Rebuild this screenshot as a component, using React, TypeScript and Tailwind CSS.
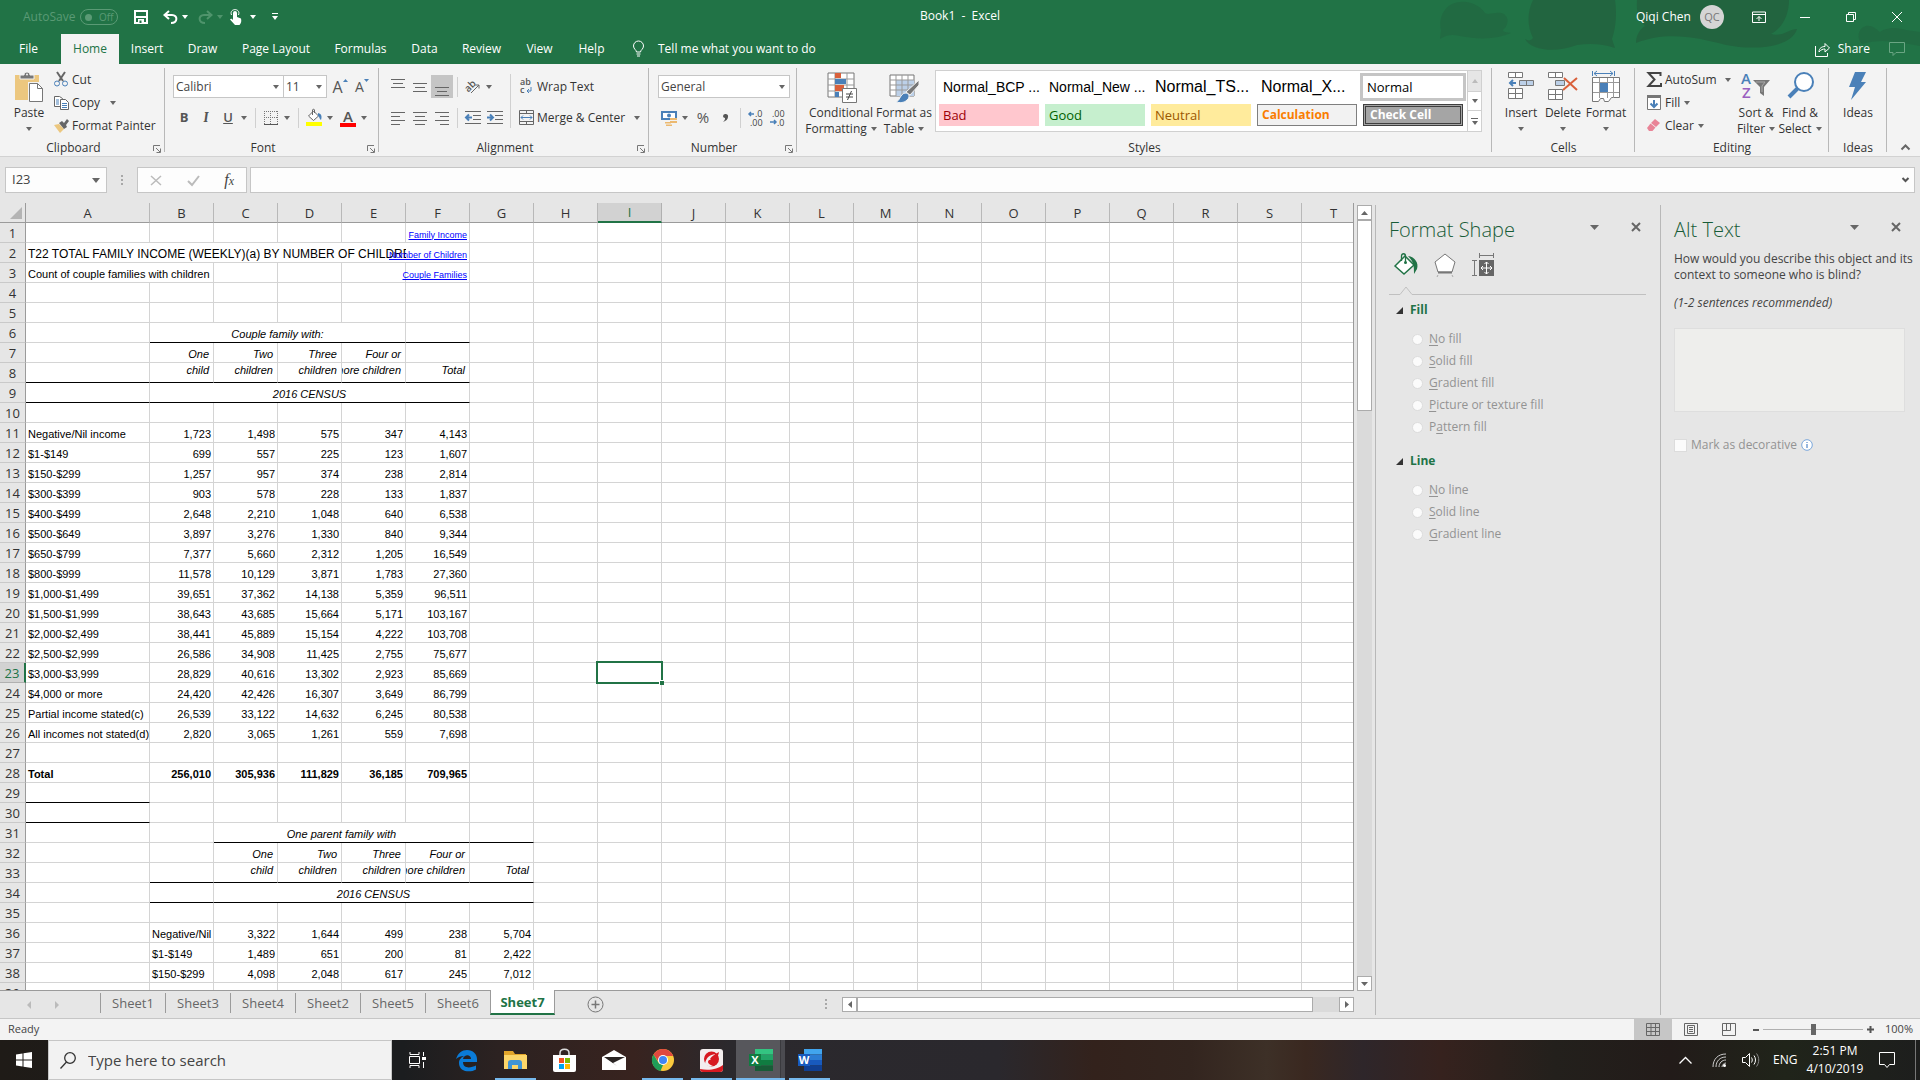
import type { ReactNode } from "react";
import { clsx } from "clsx";

interface IconProps {
  w: number;
  h: number;
  children: ReactNode;
  className?: string;
}

const Icon = ({ w, h, children, className }: IconProps) => (
  <svg
    width={w}
    height={h}
    viewBox={`0 0 ${w} ${h}`}
    fill="none"
    aria-hidden="true"
    className={clsx("shrink-0 overflow-visible", className)}
  >
    {children}
  </svg>
);

const Caret = ({ className }: { className?: string }) => (
  <Icon w={6} h={4} className={className ?? "text-[#666]"}>
    <path d="M0 0h6L3 4z" fill="currentColor" />
  </Icon>
);

const Launcher = () => (
  <Icon w={8} h={8}>
    <path d="M.5 6V.5H7M3 3l4 4M7.5 3.5v4h-4" stroke="#777" />
  </Icon>
);

/* ---------- Title bar ---------- */

const TitleArt = () => (
  <svg
    className="absolute right-0 top-0 h-16 w-[520px]"
    viewBox="0 0 520 64"
    fill="#22643f"
    aria-hidden="true"
  >
    <path d="M60 2C46 3 38 16 41 30l-1 9c6-4 12-5 20-3 20 4 38 3 51-3-8-1-10-2-6-5 6-8 1-17-9-15-5 0-8 2-11 0C79 5 70 1 60 2z" opacity=".6" />
    <path d="M133 0c-6 12-6 26 0 38-2 3-5 3-8 1 6 12 32 14 52 6 14-2 26-1 38 3l-3-9c4-12 5-26 3-39z" opacity=".9" />
    <path d="M237 0c-1 12 2 20 8 26-6 4-9 10-9 17 30-12 60-6 90 2 30 6 66 2 71-16-8 0-14 8-26 5 12-6 18-20 18-34z" />
    <path d="M462 44c-6-6-4-16 4-18 6-1 10 3 14 6 8-6 20-4 26-2l14 2v14c-20-4-40-8-58-2z" opacity=".6" />
  </svg>
);

const TitleBar = () => (
  <div className="relative flex h-[34px] items-center text-xs text-white">
    <span className="ml-[23px] w-[57px] text-[#5a9a75]">AutoSave</span>
    <button
      aria-label="AutoSave off"
      className="flex h-4 w-[38px] items-center gap-[7px] rounded-full border border-[#5a9a75] pl-1 text-[10px] leading-3 text-[#5a9a75]"
    >
      <span className="size-[7px] rounded-full bg-[#5a9a75]" />
      Off
    </button>
    <button aria-label="Save" className="ml-4 w-[29px]">
      <Icon w={14} h={14}>
        <path d="M1 1h12v12H1z" stroke="#fff" strokeWidth="2" />
        <path d="M1 6h12v2H1zM4 9h6v5H4z" fill="#fff" />
        <path d="M5.5 10.5h2V13h-2z" fill="#217346" />
      </Icon>
    </button>
    <button aria-label="Undo" className="flex w-[35px] items-center gap-1">
      <Icon w={15} h={14}>
        <path d="M6 1L1.5 5 6 9M2 5h7c6 0 6 8-1 8" stroke="#fff" strokeWidth="2" />
      </Icon>
      <Caret className="text-white" />
    </button>
    <button aria-label="Redo" className="flex w-8 items-center gap-1">
      <Icon w={15} h={14}>
        <path d="M9 1l4.5 4L9 9M13 5H6C0 5 0 13 7 13" stroke="#4f946c" strokeWidth="2" />
      </Icon>
      <Caret className="text-[#4f946c]" />
    </button>
    <button aria-label="Touch mode" className="flex w-[42px] items-center gap-2">
      <Icon w={12} h={16}>
        <path d="M3 7V4a2 2 0 0 1 4 0v4l4 1.5c1 4-1 6-1.500 6.500H5L0 10.500C1 9 2 10 3 11z" fill="#fff" />
        <path d="M1.5 6C0 2 3 .6 5 .6S10 2 8.500 6" stroke="#fff" />
      </Icon>
      <Caret className="text-white" />
    </button>
    <button aria-label="Customize Quick Access Toolbar">
      <Icon w={6} h={8}>
        <path d="M0 .5h6" stroke="#fff" />
        <path d="M0 3h6L3 7z" fill="#fff" />
      </Icon>
    </button>
    <h1 className="absolute inset-x-0 top-2 text-center leading-4 whitespace-pre">Book1  -  Excel</h1>
    <div className="relative ml-auto flex items-center pr-[18px]">
      <span className="w-16">Qiqi Chen</span>
      <span className="mr-7 flex size-6 items-center justify-center rounded-full bg-[#d5d5d5] text-[11px] text-[#777]">
        QC
      </span>
      <button aria-label="Ribbon display options" className="mr-[34px]">
        <Icon w={14} h={12}>
          <path d="M.5 1h13v10.500H.5zM.5 3.500h13M7 10V5.500M4.500 8L7 5.500 9.500 8" stroke="#fff" />
        </Icon>
      </button>
      <button aria-label="Minimize" className="mr-9">
        <Icon w={10} h={10}>
          <path d="M0 5.500h10" stroke="#fff" />
        </Icon>
      </button>
      <button aria-label="Restore" className="mr-9">
        <Icon w={10} h={10}>
          <path d="M.5 2.500h7v7h-7zM2.500 2.500v-2h7v7h-2" stroke="#fff" />
        </Icon>
      </button>
      <button aria-label="Close">
        <Icon w={10} h={10}>
          <path d="M0 0l10 10M10 0L0 10" stroke="#fff" />
        </Icon>
      </button>
    </div>
  </div>
);

const tabs = [
  { name: "File", width: "w-[61px] pr-1" },
  { name: "Home", width: "w-[58px]" },
  { name: "Insert", width: "w-[56px]" },
  { name: "Draw", width: "w-[55px]" },
  { name: "Page Layout", width: "w-[92px]" },
  { name: "Formulas", width: "w-[77px]" },
  { name: "Data", width: "w-[51px]" },
  { name: "Review", width: "w-[63px]" },
  { name: "View", width: "w-[53px]" },
  { name: "Help", width: "w-[51px]" },
];

const RibbonTabs = () => (
  <nav className="relative flex h-[30px] items-center text-xs text-white">
    {tabs.map((tab) => (
      <button
        key={tab.name}
        className={clsx(
          "h-full text-center whitespace-nowrap",
          tab.width,
          tab.name === "Home" && "bg-[#f3f3f3] text-[#217346]"
        )}
      >
        {tab.name}
      </button>
    ))}
    <button className="ml-4 flex items-center gap-[14px]">
      <Icon w={11} h={16}>
        <path d="M3.500 11C3.500 9 .5 8 .5 5a5 5 0 0 1 10 0c0 3-3 4-3 6zM3.500 13h4M4 15h3" stroke="#fff" />
      </Icon>
      Tell me what you want to do
    </button>
    <button className="ml-auto flex items-center gap-2">
      <Icon w={15} h={15}>
        <path d="M.5 4v10.500h12V11M4 10c0-4 3-5.500 6-5.500V1.500l4.500 4.500L10 10V7c-2 0-4 .5-6 3z" stroke="#fff" />
      </Icon>
      Share
    </button>
    <button aria-label="Comments" className="mr-[15px] ml-[19px]">
      <Icon w={16} h={14}>
        <path d="M.5.5h15v10H7L4 13.500v-3H.5z" stroke="#6aa583" />
      </Icon>
    </button>
  </nav>
);

/* ---------- Ribbon ---------- */

interface GroupProps {
  label: string;
  className: string;
  launcher?: boolean;
  children: ReactNode;
}

const Group = ({ label, className, launcher, children }: GroupProps) => (
  <section className={clsx("relative flex shrink-0 flex-col after:absolute after:top-1 after:right-0 after:bottom-1 after:w-px after:bg-[#b8b8b8]", className)}>
    <div className="flex h-[76px] w-full">{children}</div>
    <div className={clsx("relative h-4 text-center text-xs leading-4 text-[#333]", launcher && "pr-[18px]")}>
      {label}
      {launcher && (
        <button aria-label={`${label} settings`} className="absolute top-[5px] right-1">
          <Launcher />
        </button>
      )}
    </div>
  </section>
);

interface BigButtonProps {
  icon: ReactNode;
  lines: string[];
  className: string;
}

const BigButton = ({ icon, lines, className }: BigButtonProps) => (
  <button className={clsx("flex flex-col items-center pt-2 text-xs leading-4 whitespace-nowrap text-[#333]", className)}>
    <span className="flex h-[33px] items-start">{icon}</span>
    <span>{lines[0]}</span>
    <span className="flex h-4 items-center gap-1">
      {lines[1]}
      {lines.length > 1 && <Caret />}
    </span>
  </button>
);

interface SmallButtonProps {
  icon: ReactNode;
  label: string;
  caret?: string;
}

const SmallButton = ({ icon, label, caret }: SmallButtonProps) => (
  <button className="flex h-[23px] items-center text-xs whitespace-nowrap text-[#333]">
    <span className="flex w-[18px] shrink-0 items-center">{icon}</span>
    {label}
    {caret && (
      <span className={caret}>
        <Caret />
      </span>
    )}
  </button>
);

const ComboBox = ({ label, value, className }: { label: string; value: string; className: string }) => (
  <label className={clsx("relative flex h-[23px] items-center border border-[#c6c6c6] bg-white", className)}>
    <select aria-label={label} className="h-full w-full appearance-none pl-[2px] text-xs text-[#444] outline-none">
      <option>{value}</option>
    </select>
    <Caret className="absolute right-1 text-[#666]" />
  </label>
);

const Tool = ({ label, className, children }: { label: string; className?: string; children: ReactNode }) => (
  <button aria-label={label} className={clsx("flex h-[23px] w-[22px] shrink-0 items-center justify-center text-[#555]", className)}>
    {children}
  </button>
);

const Divider = ({ className }: { className?: string }) => (
  <span className={clsx("w-px shrink-0 bg-[#d0d0d0]", className ?? "h-5")} />
);

const Lines = ({ d }: { d: string }) => (
  <Icon w={14} h={14}>
    <path d={d} stroke="#666" />
  </Icon>
);

const ClipboardGroup = () => (
  <Group label="Clipboard" className="w-[165px]" launcher>
    <BigButton
      className="w-[54px] pl-1"
      lines={["Paste", ""]}
      icon={
        <Icon w={28} h={30}>
          <path d="M0 3h24v25H0z" fill="#ecc77f" />
          <path d="M5 7V3h4c0-4 6-4 6 0h4v4z" fill="#777" stroke="#f3f3f3" />
          <circle cx="12" cy="2.500" r="1" fill="#f3f3f3" />
          <path d="M13 10h11l5 5v15H13z" fill="#f3f3f3" />
          <path d="M14.500 11.500h8l5 5v13h-13z" fill="#fff" stroke="#777" />
          <path d="M22.500 11.500v5h5" stroke="#777" />
        </Icon>
      }
    />
    <div className="flex flex-col pt-1">
      <SmallButton
        label="Cut"
        icon={
          <Icon w={14} h={15}>
            <path d="M3 0l6 9M11 0L5 9" stroke="#666" strokeWidth="2" />
            <circle cx="3" cy="11.500" r="2.500" stroke="#4a80b8" />
            <circle cx="11" cy="11.500" r="2.500" stroke="#4a80b8" />
          </Icon>
        }
      />
      <SmallButton
        label="Copy"
        caret="ml-[10px]"
        icon={
          <Icon w={15} h={14}>
            <path d="M.5.5h5l3 2v8h-8z" fill="#fff" stroke="#666" />
            <path d="M2 4h3M2 6h3M2 8h3" stroke="#4a80b8" />
            <path d="M6.500 3.500h5l3 3v7h-8z" fill="#fff" stroke="#666" />
            <path d="M8 7.500h5M8 9.500h5M8 11.500h5" stroke="#4a80b8" />
          </Icon>
        }
      />
      <SmallButton
        label="Format Painter"
        icon={
          <Icon w={15} h={14}>
            <path d="M0 6l5-1 5 5-4 4z" fill="#ecc77f" />
            <path d="M5 4l3-2 2 2 3-4 2 2-3 4 1 2-3 2z" fill="#666" />
          </Icon>
        }
      />
    </div>
  </Group>
);

const FontGroup = () => (
  <Group label="Font" className="w-[214px]" launcher>
    <div className="flex flex-col gap-2 pt-[11px] pl-2">
      <div className="flex items-center">
        <ComboBox label="Font" value="Calibri" className="w-[111px]" />
        <ComboBox label="Font size" value="11" className="w-[43px] border-l-0" />
        <Tool label="Increase font size" className="ml-[2px] text-base">
          A
          <Icon w={5} h={3} className="mb-3">
            <path d="M0 3h5L2.500 0z" fill="#4a80b8" />
          </Icon>
        </Tool>
        <Tool label="Decrease font size" className="text-sm">
          A
          <Icon w={5} h={3} className="mb-3">
            <path d="M0 0h5L2.500 3z" fill="#4a80b8" />
          </Icon>
        </Tool>
      </div>
      <div className="flex items-center">
        <Tool label="Bold" className="text-[13px] font-bold">B</Tool>
        <Tool label="Italic" className="font-serif text-sm font-bold italic">I</Tool>
        <Tool label="Underline" className="text-[13px] font-semibold underline">U</Tool>
        <Caret className="ml-[2px] text-[#666]" />
        <Divider className="ml-2 h-5" />
        <Tool label="Borders" className="ml-1">
          <Icon w={14} h={14}>
            <path d="M0 .5h14M.5 0v14M13.500 0v14M6.500 0v13M0 6.500h13" stroke="#777" strokeDasharray="1 1" />
            <path d="M0 13.500h14" stroke="#555" />
          </Icon>
        </Tool>
        <Caret className="ml-[2px] text-[#666]" />
        <Divider className="ml-2 h-5" />
        <Tool label="Fill color" className="ml-1">
          <Icon w={16} h={17}>
            <path d="M2.500 7l5-5 5 5-5 4.500z" fill="#fff" stroke="#666" />
            <path d="M6.500 6V1c0-1 2-1 2 0v3" stroke="#666" />
            <path d="M12 4c4 1 4 4 3 7-2-1-1-3-3-4z" fill="#4a80b8" />
            <path d="M0 13h16v4H0z" fill="#ff0" />
          </Icon>
        </Tool>
        <Caret className="ml-[2px] text-[#666]" />
        <Tool label="Font color" className="ml-1">
          <span className="border-b-4 border-[#f00] px-[3px] text-[15px] leading-[14px] font-semibold">A</span>
        </Tool>
        <Caret className="ml-[2px] text-[#666]" />
      </div>
    </div>
  </Group>
);

const AlignmentGroup = () => (
  <Group label="Alignment" className="w-[270px]" launcher>
    <div className="flex flex-col gap-2 pt-[11px] pl-2">
      <div className="flex items-center">
        <Tool label="Top align"><Lines d="M0 -.5h14M2 3.500h10M0 7.500h14" /></Tool>
        <Tool label="Middle align"><Lines d="M0 3.500h14M2 7.500h10M0 11.500h14" /></Tool>
        <Tool label="Bottom align" className="bg-[#c5c5c5]"><Lines d="M0 7.500h14M2 11.500h10M0 15.500h14" /></Tool>
        <Divider className="ml-1 h-5" />
        <Tool label="Orientation" className="ml-1">
          <Icon w={16} h={16}>
            <text x="0" y="10" fontSize="10" fontWeight="600" fill="#555" transform="rotate(-45 6 8)">ab</text>
            <path d="M6 14l8-8M10.500 6H14v3.500" stroke="#666" />
          </Icon>
        </Tool>
        <Caret className="ml-[2px] text-[#666]" />
      </div>
      <div className="flex items-center">
        <Tool label="Align left"><Lines d="M0 1.500h14M0 5.500h9M0 9.500h14M0 13.500h9" /></Tool>
        <Tool label="Center"><Lines d="M0 1.500h14M2 5.500h10M0 9.500h14M2 13.500h10" /></Tool>
        <Tool label="Align right"><Lines d="M0 1.500h14M5 5.500h9M0 9.500h14M5 13.500h9" /></Tool>
        <Divider className="ml-1 h-5" />
        <Tool label="Decrease indent" className="ml-1">
          <Icon w={16} h={14}>
            <path d="M0 .5h16M8 4.500h8M8 8.500h8M0 12.500h16" stroke="#666" />
            <path d="M7 6.500H2M4 3.500l-3 3 3 3" stroke="#4a80b8" strokeWidth="2" />
          </Icon>
        </Tool>
        <Tool label="Increase indent">
          <Icon w={16} h={14}>
            <path d="M0 .5h16M8 4.500h8M8 8.500h8M0 12.500h16" stroke="#666" />
            <path d="M0 6.500h5M3 3.500l3 3-3 3" stroke="#4a80b8" strokeWidth="2" />
          </Icon>
        </Tool>
      </div>
    </div>
    <Divider className="mt-[10px] ml-1 h-[54px]" />
    <div className="flex flex-col gap-2 pt-[11px] pl-2">
      <SmallButton
        label="Wrap Text"
        icon={
          <Icon w={15} h={16}>
            <text x="1" y="6" fontSize="9" fontWeight="600" fill="#555">ab</text>
            <text x="1" y="14" fontSize="9" fontWeight="600" fill="#555">c</text>
            <path d="M12 8v4H8M10 10l-2 2 2 2" stroke="#4a80b8" />
          </Icon>
        }
      />
      <SmallButton
        label="Merge & Center"
        caret="ml-[9px]"
        icon={
          <Icon w={15} h={15}>
            <path d="M.5.5h14v14H.5zM.5 3.500h14M.5 11.500h14M7.500 0v3M7.500 12v3" stroke="#666" />
            <path d="M2 7.500h11M4 5.500l-2 2 2 2M11 5.500l2 2-2 2" stroke="#4a80b8" />
          </Icon>
        }
      />
    </div>
  </Group>
);

const NumberGroup = () => (
  <Group label="Number" className="w-[148px]" launcher>
    <div className="flex flex-col gap-2 pt-[11px] pl-[9px]">
      <ComboBox label="Number format" value="General" className="w-[132px]" />
      <div className="flex items-center">
        <Tool label="Accounting format">
          <Icon w={17} h={16}>
            <path d="M0 1h16v9H0z" fill="#4a80b8" />
            <path d="M2 3h12v5H2z" fill="#fff" />
            <circle cx="8" cy="5.500" r="2" fill="#4a80b8" />
            <path d="M9 8h7v2H9zM9 11h7v2H9zM4 12h6v1.500H4zM5 14.500h6V16H5z" fill="#ecb970" />
          </Icon>
        </Tool>
        <Caret className="ml-[2px] text-[#666]" />
        <Tool label="Percent style" className="ml-1 text-[15px]">%</Tool>
        <Tool label="Comma style">
          <Icon w={5} h={8}>
            <path d="M0 2a2 2 0 1 1 5 1C5 5 3 7 0 8c2-2 2-3 2-4C1 4 0 3 0 2z" fill="#555" />
          </Icon>
        </Tool>
        <Divider className="ml-1 h-5" />
        <Tool label="Increase decimal" className="ml-1">
          <Icon w={16} h={16}>
            <path d="M6 4H1M3 2L1 4l2 2" stroke="#4a80b8" strokeWidth="1.500" />
            <text x="7" y="7" fontSize="9" fill="#444">.0</text>
            <text x="2" y="16" fontSize="9" fill="#444">.00</text>
          </Icon>
        </Tool>
        <Tool label="Decrease decimal">
          <Icon w={16} h={16}>
            <text x="2" y="7" fontSize="9" fill="#444">.00</text>
            <path d="M0 12h6M4 10l2 2-2 2" stroke="#4a80b8" strokeWidth="1.500" />
            <text x="7" y="16" fontSize="9" fill="#444">.0</text>
          </Icon>
        </Tool>
      </div>
    </div>
  </Group>
);

const styleCells = [
  { name: "Normal_BCP ...", cls: "font-[Liberation_Sans] text-sm text-black" },
  { name: "Normal_New ...", cls: "font-[Liberation_Sans] text-sm text-black" },
  { name: "Normal_TS...", cls: "font-[Liberation_Sans] text-base text-black" },
  { name: "Normal_X...", cls: "font-[Liberation_Sans] text-base text-black" },
  { name: "Normal", cls: "text-[13px] text-black outline-3 outline-[#c5c5c5]" },
  { name: "Bad", cls: "bg-[#ffc7ce] text-[13px] text-[#9c0006]" },
  { name: "Good", cls: "bg-[#c6efce] text-[13px] text-[#006100]" },
  { name: "Neutral", cls: "bg-[#ffeb9c] text-[13px] text-[#9c5700]" },
  { name: "Calculation", cls: "border border-[#7f7f7f] bg-[#f2f2f2] text-xs font-bold text-[#fa7d00]" },
  { name: "Check Cell", cls: "border-3 border-double border-[#3f3f3f] bg-[#a5a5a5] text-xs font-bold text-white" },
];

const StylesGroup = () => (
  <Group label="Styles" className="min-w-[695px] flex-1">
    <BigButton
      className="ml-3 w-16"
      lines={["Conditional", "Formatting"]}
      icon={
        <Icon w={29} h={31}>
          <path d="M1 1h26v24H1z" fill="#fff" stroke="#777" />
          <path d="M1 7h26M1 13h26M1 19h26M8 1v24M20 1v24" stroke="#999" />
          <path d="M8 1h6v5H8zM8 13h9v6H8z" fill="#d9603b" />
          <path d="M8 7h11v5H8zM8 20h4v5H8z" fill="#4a80b8" />
          <path d="M15.500 16.500h14v14h-14z" fill="#fff" stroke="#777" />
          <path d="M19 22h7M19 25h7M24.500 19l-4 9" stroke="#444" />
        </Icon>
      }
    />
    <BigButton
      className="w-[62px]"
      lines={["Format as", "Table"]}
      icon={
        <Icon w={30} h={31}>
          <path d="M1 3h24v21H1z" fill="#fff" stroke="#777" />
          <path d="M7 8h18v16H7z" fill="#bcd0e8" />
          <path d="M1 8h24M1 13h24M1 18h24M7 3v21M13 3v21M19 3v21" stroke="#999" />
          <path d="M30 8v5l-9 10-4-3z" fill="#777" stroke="#f3f3f3" />
          <path d="M7 30c4-1 4-8 9-9 5 0 5 5 2 7-3 3-7 3-11 2z" fill="#4a80b8" stroke="#f3f3f3" />
        </Icon>
      }
    />
    <div className="mt-[6px] flex h-[62px] border border-[#d0d0d0] bg-white">
      <div className="grid grid-cols-[repeat(5,100px)] grid-rows-[22px_22px] content-start gap-[6px] pt-[5px] pr-1 pl-[3px]">
        {styleCells.map((cell) => (
          <button
            key={cell.name}
            className={clsx("flex items-center pl-1 text-left leading-5 whitespace-nowrap", cell.cls)}
          >
            {cell.name}
          </button>
        ))}
      </div>
      <div className="flex w-[14px] flex-col border-l border-[#d0d0d0]">
        <button aria-label="Scroll styles up" className="flex h-[21px] items-center justify-center border-b border-[#d0d0d0] bg-[#e6e6e6]">
          <Caret className="rotate-180 text-[#bbb]" />
        </button>
        <button aria-label="Scroll styles down" className="flex h-[19px] items-center justify-center border-b border-[#d0d0d0]">
          <Caret />
        </button>
        <button aria-label="More styles" className="flex flex-1 flex-col items-center justify-center gap-[2px]">
          <span className="h-px w-[7px] bg-[#666]" />
          <Caret />
        </button>
      </div>
    </div>
  </Group>
);

const CellsGroup = () => (
  <Group label="Cells" className="w-[143px]">
    <BigButton
      className="ml-2 w-[42px]"
      lines={["Insert", ""]}
      icon={
        <Icon w={27} h={28}>
          <path d="M.5.5h14v5H.5zM7.500.5v5M.5 16.500h14v10H.5zM7.500 17v10M.5 21.500h14" fill="#fff" stroke="#777" />
          <path d="M11.500 8.500h14v5h-14zM18.500 8v5" fill="#bcd0e8" stroke="#777" />
          <path d="M8 11H2M5 8l-3 3 3 3" stroke="#4a80b8" strokeWidth="2" />
        </Icon>
      }
    />
    <BigButton
      className="w-[42px]"
      lines={["Delete", ""]}
      icon={
        <Icon w={30} h={29}>
          <path d="M.5.5h14v5H.5zM7.500.5v5M.5 17.500h14v10H.5zM7.500 17v10M.5 22.500h14" fill="#fff" stroke="#777" />
          <path d="M7.500 8.500h9v5h-9z" fill="#bcd0e8" stroke="#777" />
          <path d="M16 6l13 12M29 6L15 18" stroke="#d9603b" strokeWidth="2" />
        </Icon>
      }
    />
    <BigButton
      className="w-[44px]"
      lines={["Format", ""]}
      icon={
        <Icon w={28} h={31}>
          <path d="M.5-1v5M22.500-1v5M2 1.500h19M5-1L2 1.500 5 4M18-1l3 2.500L18 4" stroke="#4a80b8" />
          <path d="M.5 5.500h27v20h-8l-3 4h-4l-1-3h-3l-2 3h-6z" fill="#fff" stroke="#777" />
          <path d="M1 10.500h26M1 20.500h26M7.500 6v20M15.500 6v20M21.500 6v20" stroke="#999" />
          <path d="M8 11h8v9H8z" fill="#4a80b8" />
        </Icon>
      }
    />
  </Group>
);

const EditingGroup = () => (
  <Group label="Editing" className="w-[194px]">
    <div className="flex w-[103px] flex-col pt-1 pl-3">
      <SmallButton
        label="AutoSum"
        caret="ml-2"
        icon={
          <Icon w={15} h={15}>
            <path d="M13.500 4V1H1.500l6 6.500-6 6.500h12.500v-3" stroke="#444" strokeWidth="2" />
          </Icon>
        }
      />
      <SmallButton
        label="Fill"
        caret="ml-1"
        icon={
          <Icon w={14} h={15}>
            <path d="M.5.5h13v14H.5z" fill="#fff" stroke="#777" />
            <path d="M0 0h14v3H0z" fill="#777" />
            <path d="M7 5v7M3.500 8.500L7 12l3.500-3.500" stroke="#4a80b8" strokeWidth="2" />
          </Icon>
        }
      />
      <SmallButton
        label="Clear"
        caret="ml-1"
        icon={
          <Icon w={13} h={13}>
            <path d="M8 0l5 4-4 4-5-4z" fill="#e98497" />
            <path d="M3.500 4.500l5 4-3 3.500H2L0 9z" fill="#e98497" />
          </Icon>
        }
      />
    </div>
    <BigButton
      className="w-9"
      lines={["Sort &", "Filter"]}
      icon={
        <Icon w={30} h={29}>
          <text x="0" y="12" fontSize="15" fontWeight="600" fill="#4a80b8">A</text>
          <text x="1" y="26" fontSize="15" fontWeight="600" fill="#9a5fc0">Z</text>
          <path d="M12 8h17l-6 7v9l-4-3v-6z" fill="#777" />
          <path d="M15 10h9l-3 4v6" stroke="#aaa" />
        </Icon>
      }
    />
    <BigButton
      className="ml-1 w-11"
      lines={["Find &", "Select"]}
      icon={
        <Icon w={27} h={28}>
          <circle cx="17" cy="10" r="9" fill="#fff" stroke="#4a80b8" strokeWidth="2" />
          <path d="M11 16L2 25" stroke="#4a80b8" strokeWidth="4" />
        </Icon>
      }
    />
  </Group>
);

const Ribbon = () => (
  <div className="flex h-[93px] border-b border-[#d2d2d2] bg-[#f3f3f3]">
    <ClipboardGroup />
    <FontGroup />
    <AlignmentGroup />
    <NumberGroup />
    <StylesGroup />
    <CellsGroup />
    <EditingGroup />
    <Group label="Ideas" className="w-[58px]">
      <BigButton
        className="w-full"
        lines={["Ideas"]}
        icon={
          <Icon w={18} h={28}>
            <path d="M6 0h11l-5 10h5L2 28l4-13H0z" fill="#4a80b8" />
          </Icon>
        }
      />
    </Group>
    <button aria-label="Collapse the ribbon" className="mr-[10px] ml-[14px] self-end pb-[6px]">
      <Icon w={9} h={6}>
        <path d="M.5 5.500l4-4 4 4" stroke="#666" strokeWidth="2" />
      </Icon>
    </button>
  </div>
);

const FormulaBar = () => (
  <div className="flex h-[46px] items-center px-[5px] text-[13px] text-[#444]">
    <div className="relative flex h-[26px] w-[102px] items-center border border-[#c6c6c6] bg-[#fdfdfd]">
      <input aria-label="Name box" defaultValue="I23" className="w-full pl-[6px] outline-none" />
      <Icon w={8} h={5} className="absolute right-[6px]">
        <path d="M0 0h8L4 5z" fill="#666" />
      </Icon>
    </div>
    <Icon w={2} h={10} className="mx-[14px]">
      <path d="M0 0h2v2H0zM0 4h2v2H0zM0 8h2v2H0z" fill="#a8a8a8" />
    </Icon>
    <div className="flex h-[26px] w-[110px] items-center justify-between border border-[#c6c6c6] bg-[#fdfdfd] px-3">
      <button aria-label="Cancel">
        <Icon w={12} h={11}>
          <path d="M1 1l10 9M11 1L1 10" stroke="#bbb" strokeWidth="1.500" />
        </Icon>
      </button>
      <button aria-label="Enter">
        <Icon w={13} h={11}>
          <path d="M1 6l4 4 7-9" stroke="#bbb" strokeWidth="2" />
        </Icon>
      </button>
      <button aria-label="Insert function" className="font-[Liberation_Serif] text-base leading-5 italic">
        f<span className="text-xs">x</span>
      </button>
    </div>
    <div className="ml-[3px] flex h-[26px] flex-1 items-center border border-[#c6c6c6] bg-[#fdfdfd] pr-[5px]">
      <input aria-label="Formula bar" className="flex-1 px-2 outline-none" />
      <Icon w={7} h={6}>
        <path d="M.5 1l3 3 3-3" stroke="#555" strokeWidth="2" />
      </Icon>
    </div>
  </div>
);

/* ---------- Worksheet ---------- */

const columns = "ABCDEFGHIJKLMNOPQRST".split("");

interface Cell {
  text?: string;
  span?: number;
  kind?: "text" | "title" | "link" | "head" | "headTop" | "center" | "num" | "bold" | "boldNum";
  rule?: boolean;
}

const cells: Record<string, Cell> = {
  F1: { text: "Family Income", kind: "link" },
  A2: { text: "T22 TOTAL FAMILY INCOME (WEEKLY)(a) BY NUMBER OF CHILDREN", kind: "title", span: 5 },
  F2: { text: "Number of Children", kind: "link" },
  A3: { text: "Count of couple families with children", kind: "text", span: 2 },
  F3: { text: "Couple Families", kind: "link" },
  B6: { text: "Couple family with:", kind: "center", span: 4, rule: true },
  F6: { rule: true },
  A8: { rule: true },
  A9: { rule: true },
  B9: { text: "2016 CENSUS", kind: "center", span: 5, rule: true },
  A29: { rule: true },
  A30: { rule: true },
  C31: { text: "One parent family with", kind: "center", span: 4, rule: true },
  G31: { rule: true },
  B33: { rule: true },
  B34: { rule: true },
  C34: { text: "2016 CENSUS", kind: "center", span: 5, rule: true },
};

const headTop = ["One", "Two", "Three", "Four or"];
const headBottom = ["child", "children", "children", "more children", "Total"];

const addHeadings = (firstColumn: number, row: number) => {
  headTop.forEach((text, i) => {
    cells[columns[firstColumn + i] + row] = { text, kind: "head" };
  });
  headBottom.forEach((text, i) => {
    cells[columns[firstColumn + i] + (row + 1)] = { text, kind: "headTop", rule: true };
  });
};

addHeadings(1, 7);
addHeadings(2, 32);

const coupleIncome = [
  ["Negative/Nil income", "1,723", "1,498", "575", "347", "4,143"],
  ["$1-$149", "699", "557", "225", "123", "1,607"],
  ["$150-$299", "1,257", "957", "374", "238", "2,814"],
  ["$300-$399", "903", "578", "228", "133", "1,837"],
  ["$400-$499", "2,648", "2,210", "1,048", "640", "6,538"],
  ["$500-$649", "3,897", "3,276", "1,330", "840", "9,344"],
  ["$650-$799", "7,377", "5,660", "2,312", "1,205", "16,549"],
  ["$800-$999", "11,578", "10,129", "3,871", "1,783", "27,360"],
  ["$1,000-$1,499", "39,651", "37,362", "14,138", "5,359", "96,511"],
  ["$1,500-$1,999", "38,643", "43,685", "15,664", "5,171", "103,167"],
  ["$2,000-$2,499", "38,441", "45,889", "15,154", "4,222", "103,708"],
  ["$2,500-$2,999", "26,586", "34,908", "11,425", "2,755", "75,677"],
  ["$3,000-$3,999", "28,829", "40,616", "13,302", "2,923", "85,669"],
  ["$4,000 or more", "24,420", "42,426", "16,307", "3,649", "86,799"],
  ["Partial income stated(c)", "26,539", "33,122", "14,632", "6,245", "80,538"],
  ["All incomes not stated(d)", "2,820", "3,065", "1,261", "559", "7,698"],
];

const oneParentIncome = [
  ["Negative/Nil income", "3,322", "1,644", "499", "238", "5,704"],
  ["$1-$149", "1,489", "651", "200", "81", "2,422"],
  ["$150-$299", "4,098", "2,048", "617", "245", "7,012"],
];

const addBlock = (rows: string[][], firstColumn: number, firstRow: number, bold = false) => {
  rows.forEach((values, r) => {
    values.forEach((text, c) => {
      const kind = c === 0 ? (bold ? "bold" : "text") : bold ? "boldNum" : "num";
      cells[columns[firstColumn + c] + (firstRow + r)] = { text, kind };
    });
  });
};

addBlock(coupleIncome, 0, 11);
addBlock([["Total", "256,010", "305,936", "111,829", "36,185", "709,965"]], 0, 28, true);
addBlock(oneParentIncome, 1, 36);

const kindClass = {
  text: "justify-start overflow-hidden pl-[2px] pt-[2px]",
  title: "justify-start overflow-hidden pl-[2px] pt-[2px] text-xs",
  link: "justify-end pr-[2px] pt-[4px] text-[9px]",
  head: "justify-end overflow-hidden pr-1 pt-[2px] italic",
  headTop: "justify-end overflow-hidden pr-1 pb-[6px] italic",
  center: "justify-center pt-[2px] italic",
  num: "justify-end pr-[2px] pt-[2px]",
  bold: "justify-start pl-[2px] pt-[2px] font-bold",
  boldNum: "justify-end pr-[2px] pt-[2px] font-bold",
};

const SheetRow = ({ row }: { row: number }) => {
  const tds: ReactNode[] = [];
  for (let c = 0; c < columns.length; ) {
    const id = columns[c] + row;
    const cell = cells[id] ?? {};
    tds.push(
      <td
        key={id}
        colSpan={cell.span}
        className={clsx(
          "h-5 border-b p-0",
          cell.kind !== "title" && "border-r border-r-[#d4d4d4]",
          cell.rule ? "border-b-black" : "border-b-[#d4d4d4]",
          id === "I23" && "relative"
        )}
      >
        {cell.text && (
          <div className={clsx("flex h-[19px] items-center leading-4 whitespace-nowrap", kindClass[cell.kind ?? "text"])}>
            {cell.kind === "link" ? (
              <a href="#" className="shrink-0 text-[#0000ff] underline">
                {cell.text}
              </a>
            ) : (
              <span className="shrink-0">{cell.text}</span>
            )}
          </div>
        )}
        {id === "I23" && (
          <span className="absolute -inset-x-[2px] -inset-y-[2px] border-2 border-[#217346] after:absolute after:-right-[3px] after:-bottom-[3px] after:size-[5px] after:border-t after:border-l after:border-white after:bg-[#217346]" />
        )}
      </td>
    );
    c += cell.span ?? 1;
  }
  return (
    <tr className="h-5">
      <th
        scope="row"
        className={clsx(
          "h-5 border-r border-b p-0 pt-px font-[Open_Sans] text-[13px] leading-[18px] font-normal",
          row === 23
            ? "border-r-2 border-r-[#217346] border-b-[#b0b0b0] bg-[#d2d2d2] text-[#217346]"
            : "border-r-[#9b9b9b] border-b-[#c9c9c9] bg-[#e6e6e6] text-[#333]"
        )}
      >
        {row}
      </th>
      {tds}
    </tr>
  );
};

const Worksheet = () => (
  <div className="min-h-0 flex-1 overflow-hidden border-r border-b border-[#9b9b9b]">
    <table className="w-[1366px] table-fixed border-separate border-spacing-0 bg-white font-[Liberation_Sans] text-[11px] text-black">
      <colgroup>
        <col className="w-[26px]" />
        {columns.map((name) => (
          <col key={name} className={name === "A" ? "w-[124px]" : "w-16"} />
        ))}
      </colgroup>
      <thead>
        <tr className="h-5">
          <td className="border-r border-b border-[#9b9b9b] bg-[#e6e6e6] p-0">
            <Icon w={12} h={12} className="ml-[10px]">
              <path d="M12 0v12H0z" fill="#b4b4b4" />
            </Icon>
          </td>
          {columns.map((name) => (
            <th
              key={name}
              scope="col"
              className={clsx(
                "h-5 border-r p-0 font-[Open_Sans] text-[13px] leading-[18px] font-normal",
                name === "I"
                  ? "border-b-2 border-r-[#b0b0b0] border-b-[#217346] bg-[#d2d2d2] text-[#217346]"
                  : "border-b border-r-[#b8b8b8] border-b-[#9b9b9b] bg-[#e6e6e6] text-[#333]"
              )}
            >
              {name}
            </th>
          ))}
        </tr>
      </thead>
      <tbody>
        {Array.from({ length: 39 }, (_, i) => (
          <SheetRow key={i} row={i + 1} />
        ))}
      </tbody>
    </table>
  </div>
);

const VerticalScroll = () => (
  <div className="mt-[2px] mr-[3px] ml-[3px] flex w-[15px] flex-col bg-[#dadada]">
    <button aria-label="Scroll up" className="flex h-[15px] items-center justify-center border border-[#ababab] bg-white">
      <Icon w={7} h={4}><path d="M0 4h7L3.500 0z" fill="#666" /></Icon>
    </button>
    <div className="h-[191px] border border-[#ababab] bg-white" />
    <button aria-label="Scroll down" className="mt-auto flex h-[15px] items-center justify-center border border-[#ababab] bg-white">
      <Icon w={7} h={4}><path d="M0 0h7L3.500 4z" fill="#666" /></Icon>
    </button>
  </div>
);

const sheets = ["Sheet1", "Sheet3", "Sheet4", "Sheet2", "Sheet5", "Sheet6", "Sheet7"];

const SheetTabs = () => (
  <div className="flex h-[27px] shrink-0 text-[13px] text-[#666]">
    <div className="flex w-[100px] items-center gap-6 pl-[27px]">
      <Icon w={4} h={8}><path d="M4 0v8L0 4z" fill="#bbb" /></Icon>
      <Icon w={4} h={8}><path d="M0 0v8l4-4z" fill="#bbb" /></Icon>
    </div>
    {sheets.map((name) => {
      const active = name === "Sheet7";
      return (
        <button
          key={name}
          className={clsx(
            "w-[65px] text-center leading-4",
            active
              ? "-mt-px h-[25px] border-x border-b-2 border-x-[#9b9b9b] border-b-[#217346] bg-white font-bold text-[#217346]"
              : "mt-[2px] h-5 border-l border-[#9b9b9b]"
          )}
        >
          {name}
        </button>
      );
    })}
    <button aria-label="New sheet" className="ml-8 self-center">
      <Icon w={17} h={17}>
        <circle cx="8.500" cy="8.500" r="7.500" stroke="#777" />
        <path d="M8.500 4.500v8M4.500 8.500h8" stroke="#777" strokeWidth="1.500" />
      </Icon>
    </button>
    <div className="ml-auto flex items-center pb-px">
      <Icon w={2} h={10} className="mr-[15px]">
        <path d="M0 0h2v2H0zM0 4h2v2H0zM0 8h2v2H0z" fill="#a8a8a8" />
      </Icon>
      <div className="mr-[21px] flex h-[15px] w-[512px] bg-[#dadada]">
        <button aria-label="Scroll left" className="flex w-[15px] items-center justify-center border border-[#ababab] bg-white">
          <Icon w={4} h={7}><path d="M4 0v7L0 3.500z" fill="#666" /></Icon>
        </button>
        <div className="w-[456px] border border-[#ababab] bg-white" />
        <button aria-label="Scroll right" className="ml-auto flex w-[15px] items-center justify-center border border-[#ababab] bg-white">
          <Icon w={4} h={7}><path d="M0 0v7l4-3.500z" fill="#666" /></Icon>
        </button>
      </div>
    </div>
  </div>
);

/* ---------- Side panes ---------- */

const PaneHeader = ({ title }: { title: string }) => (
  <div className="flex h-12 items-center">
    <h2 className="flex-1 pt-[2px] text-xl font-light text-[#185c37]">{title}</h2>
    <button aria-label={`${title} options`} className="mr-8 mb-1">
      <Icon w={9} h={5}><path d="M0 0h9L4.500 5z" fill="#666" /></Icon>
    </button>
    <button aria-label={`Close ${title}`} className="mb-1">
      <Icon w={10} h={10}><path d="M1 1l8 8M9 1L1 9" stroke="#666" strokeWidth="2" /></Icon>
    </button>
  </div>
);

// the underlined letter is the keyboard accelerator
const OptionList = ({ title, name, options }: { title: string; name: string; options: [string, number][] }) => (
  <fieldset className="pl-[7px] text-xs">
    <legend className="flex h-6 items-center gap-[7px] font-bold text-[#217346]">
      <Icon w={7} h={7}><path d="M7 0v7H0z" fill="#333" /></Icon>
      {title}
    </legend>
    <div className="pt-[6px] pl-4">
      {options.map(([text, key]) => (
        <label key={text} className="flex h-[22px] items-center gap-[6px] text-[#939393]">
          <input type="radio" name={name} disabled className="size-[11px] appearance-none rounded-full border border-[#dcdcdc] bg-[#fbfbfb]" />
          <span>
            {text.slice(0, key)}
            <u className="underline-offset-2">{text[key]}</u>
            {text.slice(key + 1)}
          </span>
        </label>
      ))}
    </div>
  </fieldset>
);

const FormatShapePane = () => (
  <aside className="mt-[2px] mb-[3px] w-[285px] shrink-0 border-l border-[#b8b8b8] pr-[14px] pl-[13px]">
    <div className="pr-[5px]">
      <PaneHeader title="Format Shape" />
    </div>
    <div className="flex h-[33px] items-start gap-4 pl-[5px]">
      <button aria-label="Fill & Line">
        <Icon w={24} h={23}>
          <path d="M1 13L11 3l9 9-10 9z" fill="#fff" stroke="#217346" strokeWidth="1.500" />
          <path d="M7.500 8V3c0-3 4-3 4 0v7" stroke="#217346" strokeWidth="1.300" />
          <circle cx="11.500" cy="9.500" r="1.500" fill="#217346" />
          <path d="M14 3c7 1 11 7 9 13l-3 5c0-8 0-12-6-18z" fill="#217346" />
        </Icon>
      </button>
      <button aria-label="Effects">
        <Icon w={22} h={24}>
          <path d="M4 19L1 9l10-8 10 8-3 10z" fill="#fff" stroke="#777" />
          <path d="M4 19.500h14" stroke="#777" strokeWidth="2" />
          <path d="M4 22l-1 2M18 22l1 2" stroke="#aaa" />
        </Icon>
      </button>
      <button aria-label="Size & Properties">
        <Icon w={22} h={23}>
          <path d="M7 7h15v16H7z" fill="#666" />
          <path d="M7.500 0v5M21.500 0v5M8 2.500h13M0 7.500h5M0 22.500h5M2.500 8v14" stroke="#777" />
          <path d="M14.500 9v12M9 15h11M12.500 11l2-2 2 2M12.500 19l2 2 2-2M11 13l-2 2 2 2M18 13l2 2-2 2" stroke="#fff" />
        </Icon>
      </button>
    </div>
    <svg className="h-[9px] w-full" viewBox="0 0 257 9" fill="none" aria-hidden="true">
      <path d="M0 8.500h11L17 1l6 7.500h234" stroke="#c0c0c0" />
    </svg>
    <div className="flex flex-col gap-[11px] pt-[3px]">
      <OptionList
        title="Fill"
        name="fill"
        options={[["No fill", 0], ["Solid fill", 0], ["Gradient fill", 0], ["Picture or texture fill", 0], ["Pattern fill", 1]]}
      />
      <OptionList title="Line" name="line" options={[["No line", 0], ["Solid line", 0], ["Gradient line", 0]]} />
    </div>
  </aside>
);

const AltTextPane = () => (
  <aside className="mt-[2px] mb-[3px] w-[260px] shrink-0 border-l border-[#b8b8b8] pr-[15px] pl-[13px] text-xs text-[#444]">
    <div className="pr-1">
      <PaneHeader title="Alt Text" />
    </div>
    <p className="-mt-[2px] -mr-3 leading-4">
      How would you describe this object and its
      <br />
      context to someone who is blind?
    </p>
    <p className="mt-3 leading-4 italic">(1-2 sentences recommended)</p>
    <textarea aria-label="Alt text description" disabled className="mt-[17px] block h-[84px] w-full resize-none border border-[#dedede] bg-[#eeeeec]" />
    <label className="mt-[25px] flex items-center gap-1 leading-4 text-[#939393]">
      <input type="checkbox" disabled className="size-[13px] appearance-none border border-[#dcdcdc] bg-[#fbfbfb]" />
      Mark as decorative
      <Icon w={12} h={12}>
        <circle cx="6" cy="6" r="5.300" fill="#fff" stroke="#7aa7dc" />
        <path d="M6 5v4M6 3v1" stroke="#2f6fbf" />
      </Icon>
    </label>
  </aside>
);

const StatusBar = () => (
  <div className="flex h-[22px] items-center border-t border-[#c6c6c6] bg-[#f3f3f3] text-[11px] leading-4 text-[#444]">
    <span className="pb-[2px] pl-2">Ready</span>
    <div className="ml-auto flex h-full items-center">
      <button aria-label="Normal view" className="flex h-full w-[38px] items-center justify-center bg-[#c6c6c6]">
        <Icon w={14} h={13}><path d="M.5.5h13v12H.5zM.5 4.500h13M.5 8.500h13M5 0v12M9.500 0v12" stroke="#666" /></Icon>
      </button>
      <button aria-label="Page layout view" className="flex h-full w-[38px] items-center justify-center">
        <Icon w={14} h={13}><path d="M.5.5h13v12H.5zM3.500 2.500h7v8h-7zM5 4.500h4M5 6.500h4M5 8.500h4" stroke="#666" /></Icon>
      </button>
      <button aria-label="Page break view" className="flex h-full w-[38px] items-center justify-center">
        <Icon w={14} h={13}><path d="M.5.5h13v12H.5zM.5 7.500h8V.5M4.500.5v7" stroke="#666" /></Icon>
      </button>
      <button aria-label="Zoom out" className="ml-[5px]">
        <Icon w={6} h={6}><path d="M0 3h6" stroke="#555" strokeWidth="2" /></Icon>
      </button>
      <input
        type="range"
        aria-label="Zoom"
        min={10}
        max={190}
        defaultValue={100}
        className="mx-1 h-3 w-[100px] appearance-none bg-[linear-gradient(#b0b0b0,#b0b0b0)] bg-[length:100%_1px] bg-center bg-no-repeat [&::-webkit-slider-thumb]:h-[11px] [&::-webkit-slider-thumb]:w-[5px] [&::-webkit-slider-thumb]:appearance-none [&::-webkit-slider-thumb]:bg-[#666]"
      />
      <button aria-label="Zoom in">
        <Icon w={7} h={7}><path d="M0 3.500h7M3.500 0v7" stroke="#555" strokeWidth="2" /></Icon>
      </button>
      <span className="mr-[7px] ml-[11px] pb-[2px]">100%</span>
    </div>
  </div>
);

/* ---------- Taskbar ---------- */

const OfficeIcon = ({ letter, shades }: { letter: string; shades: string[] }) => (
  <Icon w={24} h={22}>
    <path d="M6 0h18v5.500H6z" fill={shades[0]} />
    <path d="M6 5.500h18V11H6z" fill={shades[1]} />
    <path d="M6 11h18v5.500H6z" fill={shades[2]} />
    <path d="M6 16.500h18V22H6z" fill={shades[3]} />
    <path d="M0 5h12v12H0z" fill={shades[4]} />
    <text x="6" y="15" textAnchor="middle" fontSize="11" fontWeight="700" fill="#fff">{letter}</text>
  </Icon>
);

const apps = [
  {
    name: "Task View",
    icon: (
      <Icon w={17} h={16}>
        <path d="M1 0v2.500h9V0M1 16v-2.500h9V16M.5 4.500h10v7H.5zM14.500 0v4M14.500 10v6" stroke="#fff" />
        <path d="M13 5h4v3h-4z" fill="#fff" />
      </Icon>
    ),
  },
  {
    name: "Edge",
    icon: (
      <Icon w={21} h={21}>
        <path d="M0 9C2 3 6 0 11 0c6 0 10 4 10 9v3H7c0 7 8 6 13 3.500v4C14 23 3 22 3 13c0-4 3-6 5-7-3 0-6 1-8 3zm7 0h8c0-5-7-5-8 0z" fill="#0a7bd8" fillRule="evenodd" />
      </Icon>
    ),
  },
  {
    name: "File Explorer",
    open: true,
    icon: (
      <Icon w={23} h={18}>
        <path d="M0 0h9l2 3h11v15H0z" fill="#e2a52a" />
        <path d="M0 4h23v14H0z" fill="#fcd669" />
        <path d="M4 18v-6c0-2 1-3 3-3h8c2 0 3 1 3 3v6h-4v-4H8v4z" fill="#3f94d5" />
      </Icon>
    ),
  },
  {
    name: "Microsoft Store",
    icon: (
      <Icon w={23} h={23}>
        <path d="M7 7V4c0-5 9-5 9 0v3" stroke="#ddd" strokeWidth="1.500" />
        <path d="M0 6h23v15a2 2 0 0 1-2 2H2a2 2 0 0 1-2-2z" fill="#fff" />
        <path d="M6 9h5v5H6z" fill="#f25022" />
        <path d="M12 9h5v5h-5z" fill="#7fba00" />
        <path d="M6 15h5v5H6z" fill="#00a4ef" />
        <path d="M12 15h5v5h-5z" fill="#ffb900" />
      </Icon>
    ),
  },
  {
    name: "Mail",
    icon: (
      <Icon w={24} h={20}>
        <path d="M0 7l12-7 12 7v13H0z" fill="#fff" />
        <path d="M2 7h21l-12 6 4 3z" fill="#2a2423" />
      </Icon>
    ),
  },
  {
    name: "Chrome",
    open: true,
    icon: (
      <Icon w={22} h={22}>
        <circle cx="11" cy="11" r="11" fill="#fbc93d" />
        <path d="M1.500 5.500A11 11 0 0 1 20.500 5.500L21 7H11l-5 5z" fill="#e0483e" />
        <path d="M1.500 5.500l5.500 9 4 1.500-2.500 6A11 11 0 0 1 1.500 5.500z" fill="#1f9d58" />
        <circle cx="11" cy="11" r="5" fill="#fff" />
        <circle cx="11" cy="11" r="4" fill="#4285f4" />
      </Icon>
    ),
  },
  {
    name: "Trend Micro",
    open: true,
    icon: (
      <Icon w={23} h={23}>
        <rect width="23" height="23" rx="3" fill="#f3eeee" />
        <path d="M0 20c9 2 18 0 23-4v4a3 3 0 0 1-3 3H3c-2 0-3-1-3-3z" fill="#d71920" />
        <circle cx="11.500" cy="10" r="7.500" fill="#d71920" />
        <path d="M5 15c2 2 5 3 8 2-5-2-6-4-4-6 3 0 5-2 6-6-5 1-9 3-10 10z" fill="#f3eeee" />
        <path d="M10 10c2-3 4-4 9-7-1 6-4 8-8 8z" fill="#d71920" />
      </Icon>
    ),
  },
  {
    name: "Excel",
    open: true,
    active: true,
    icon: <OfficeIcon letter="X" shades={["#33c481", "#21a366", "#107c41", "#185c37", "#107c41"]} />,
  },
  {
    name: "Word",
    open: true,
    icon: <OfficeIcon letter="W" shades={["#41a5ee", "#2b7cd3", "#185abd", "#103f91", "#185abd"]} />,
  },
];

const Taskbar = () => (
  <footer className="flex h-10 bg-[linear-gradient(90deg,#1f1b17_0%,#1b1d1f_21%,#2c2221_26%,#38231f_33%,#2b292d_38%,#2a282d_52%,#33221c_57%,#33251f_62%,#3d3027_66%,#3a2820_68%,#2e262a_71%,#36221e_75%,#23201c_81%,#221b19_87%,#20241a_93%,#1d1e1d_100%)] text-xs text-white">
    <button aria-label="Start" className="flex w-12 items-center justify-center">
      <Icon w={16} h={16}>
        <path d="M0 2.500l6.500-1v6H0zM7.500 1.300L16 0v7.500H7.500zM0 8.500h6.500v6L0 13.500zM7.500 8.500H16V16l-8.500-1.300z" fill="#fff" />
      </Icon>
    </button>
    <label className="mr-px flex w-[344px] items-center gap-3 border border-[#c6c6c6] bg-[#f2f2f2] pl-[11px] text-[15px] text-[#444]">
      <Icon w={16} h={17}>
        <circle cx="10" cy="6" r="5.300" stroke="#333" strokeWidth="1.300" />
        <path d="M6.500 10L.5 16.500" stroke="#333" strokeWidth="1.300" />
      </Icon>
      <input aria-label="Search" placeholder="Type here to search" className="flex-1 outline-none placeholder:text-[#444]" />
    </label>
    {apps.map((app) => (
      <button
        key={app.name}
        aria-label={app.name}
        className={clsx(
          "relative flex w-[49px] items-center justify-center",
          app.active && "bg-[linear-gradient(90deg,#57575c_44px,#3a3a3e_44px,#3a3a3e_45px,#4b4b50_45px)]"
        )}
      >
        {app.icon}
        {app.open && <span className={clsx("absolute bottom-0 h-[2px] bg-[#76b9ed]", app.active ? "inset-x-0" : "inset-x-1")} />}
      </button>
    ))}
    <div className="ml-auto flex items-center">
      <Icon w={13} h={8} className="mr-5"><path d="M.5 7.500l6-6 6 6" stroke="#fff" strokeWidth="1.300" /></Icon>
      <Icon w={14} h={14} className="mr-4">
        <path d="M1 14C1 6 6 1 14 1M4 14c0-6 4-10 10-10M7 14c0-4 3-7 7-7M10 14c0-2 2-4 4-4" stroke="#ccc" />
        <circle cx="12.500" cy="12.500" r="1.500" fill="#fff" />
      </Icon>
      <Icon w={17} h={14} className="mr-[14px]">
        <path d="M.5 4.500h3l4-4v13l-4-4h-3zM9.500 4.500c1 2 1 3 0 5M12 2.500c2 3 2 6 0 9" stroke="#fff" />
        <path d="M14.500.5c3 4 3 9 0 13" stroke="#888" />
      </Icon>
      <span className="w-[33px]">ENG</span>
      <time className="w-[58px] text-center leading-[18px]">
        2:51 PM
        <br />
        4/10/2019
      </time>
      <button aria-label="Notifications" className="ml-[15px]">
        <Icon w={16} h={16}><path d="M.5.5h15v12h-5L8 15.500 5.500 12.500h-5z" stroke="#fff" /></Icon>
      </button>
      <span className="mr-1 ml-5 h-10 w-px bg-[#777]" />
    </div>
  </footer>
);

export default function App() {
  return (
    <div className="flex h-screen flex-col overflow-hidden bg-[#e6e6e6] font-['Open_Sans','Noto_Sans',sans-serif]">
      <header className="relative bg-[#217346]">
        <TitleArt />
        <TitleBar />
        <RibbonTabs />
      </header>
      <Ribbon />
      <FormulaBar />
      <main className="flex min-h-0 flex-1">
        <div className="flex min-w-0 flex-1 flex-col">
          <div className="flex min-h-0 flex-1">
            <Worksheet />
            <VerticalScroll />
          </div>
          <SheetTabs />
        </div>
        <FormatShapePane />
        <AltTextPane />
      </main>
      <StatusBar />
      <Taskbar />
    </div>
  );
}
